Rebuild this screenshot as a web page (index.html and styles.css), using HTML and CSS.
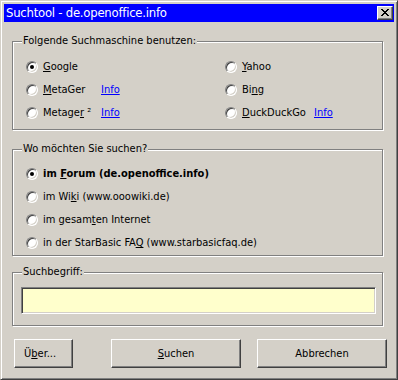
FILE: index.html
```html
<!DOCTYPE html>
<html lang="de">
<head>
<meta charset="utf-8">
<title>Suchtool</title>
<link rel="stylesheet" href="styles.css">
</head>
<body>
<div class="window">
  <div class="titlebar">
    <span class="title">Suchtool - de.openoffice.info</span>
    <span class="close">
      <svg width="8" height="7" viewBox="0 0 8 7"><path d="M0 0h2v1h1v1h2v-1h1v-1h2v1h-1v1h-1v1h-1v1h1v1h1v1h1v1h-2v-1h-1v-1h-2v1h-1v1h-2v-1h1v-1h1v-1h1v-1h-1v-1h-1v-1h-1z" fill="#000"/></svg>
    </span>
  </div>
  <div class="content">
    <div class="group g-engines">
      <span class="legend">Folgende Suchmaschine benutzen:</span>
      <div class="engines">
        <div class="opt"><span class="radio checked"></span><span><u>G</u>oogle</span></div>
        <span></span>
        <div class="opt"><span class="radio"></span><span><u>Y</u>ahoo</span></div>
        <span></span>
        <div class="opt"><span class="radio"></span><span><u>M</u>etaGer</span></div>
        <a class="info" href="#">Info</a>
        <div class="opt"><span class="radio"></span><span>Bi<u>n</u>g</span></div>
        <span></span>
        <div class="opt"><span class="radio"></span><span>Metage<u>r</u> ²</span></div>
        <a class="info" href="#">Info</a>
        <div class="opt"><span class="radio"></span><span><u>D</u>uckDuckGo</span></div>
        <a class="info" href="#">Info</a>
      </div>
    </div>
    <div class="group g-where">
      <span class="legend">Wo möchten Sie suchen?</span>
      <div class="places">
        <div class="opt"><span class="radio checked"></span><b>im <u>F</u>orum (de.openoffice.info)</b></div>
        <div class="opt"><span class="radio"></span><span>im Wi<u>k</u>i (www.ooowiki.de)</span></div>
        <div class="opt"><span class="radio"></span><span>im gesam<u>t</u>en Internet</span></div>
        <div class="opt"><span class="radio"></span><span>in der StarBasic FA<u>Q</u> (www.starbasicfaq.de)</span></div>
      </div>
    </div>
    <div class="group g-term">
      <span class="legend">Suchbegriff:</span>
      <input class="term" type="text" value="">
    </div>
    <div class="buttons">
      <button class="btn btn-about">Ü<u>b</u>er...</button>
      <button class="btn btn-search"><u>S</u>uchen</button>
      <button class="btn btn-cancel">Abbrechen</button>
    </div>
  </div>
</div>
</body>
</html>
```

FILE: styles.css
```css
html, body {
  margin: 0;
  padding: 0;
  background: #d4d0c8;
}

body {
  font-family: "DejaVu Sans", "Liberation Sans", sans-serif;
  font-stretch: semi-condensed;
  font-size: 11px;
  color: #000;
}

.window {
  box-sizing: border-box;
  width: 398px;
  height: 380px;
  padding: 3px;
  border: 1px solid;
  border-color: #d4d0c8 #404040 #404040 #d4d0c8;
  box-shadow: inset 1px 1px #fff, inset -1px -1px #808080;
  background: #d4d0c8;
}

.titlebar {
  height: 18px;
  background: #0000ff;
  display: flex;
  align-items: center;
  justify-content: space-between;
  padding: 0 1px 0 2px;
}

.title {
  color: #fff;
  font-size: 13px;
  letter-spacing: -0.25px;
  line-height: 18px;
}

.close {
  box-sizing: border-box;
  width: 16px;
  height: 14px;
  background: #d4d0c8;
  border: 1px solid;
  border-color: #fff #404040 #404040 #fff;
  box-shadow: inset -1px -1px #808080;
  display: flex;
  align-items: center;
  justify-content: center;
  padding: 0 1px 1px 0;
}

.close svg {
  display: block;
}

.content {
  padding: 19px 0 0 8px;
}

.group {
  position: relative;
  box-sizing: border-box;
  width: 371px;
  border: 1px solid #808080;
  box-shadow: inset 1px 1px #fff, 1px 1px #fff;
}

.legend {
  position: absolute;
  top: -8px;
  left: 9px;
  padding: 0 1px;
  background: #d4d0c8;
  line-height: 14px;
}

.g-engines {
  height: 89px;
  padding: 13px 0 0 13px;
}

.engines {
  display: grid;
  grid-template-columns: 75px 124px 89px auto;
  grid-auto-rows: 23px;
  align-items: center;
}

.opt {
  display: flex;
  align-items: center;
  gap: 5px;
  white-space: nowrap;
}

.radio {
  position: relative;
  box-sizing: border-box;
  width: 12px;
  height: 12px;
  flex: none;
  border-radius: 50%;
  background: #fff;
  border: 1px solid;
  border-color: #808080 #fff #fff #808080;
  box-shadow: inset 1px 1px #404040, inset -1px -1px #d4d0c8;
}

.radio.checked::after {
  content: "";
  position: absolute;
  left: 3px;
  top: 3px;
  width: 4px;
  height: 4px;
  border-radius: 50%;
  background: #000;
}

.info {
  color: #0000ff;
  text-decoration: underline;
}

.g-where {
  height: 107px;
  margin-top: 19px;
  padding: 12px 0 0 13px;
}

.places {
  display: grid;
  grid-auto-rows: 23px;
  align-items: center;
}

.places b {
  font-weight: bold;
}

.g-term {
  height: 54px;
  margin-top: 16px;
  padding: 14px 6px 11px 8px;
}

.term {
  display: block;
  box-sizing: border-box;
  width: 355px;
  height: 27px;
  margin: 0;
  padding: 2px 4px;
  background: #ffffcc;
  border: 1px solid;
  border-color: #808080 #fff #fff #808080;
  box-shadow: inset 1px 1px #404040, inset -1px -1px #d4d0c8;
  font: inherit;
  outline: none;
}

.buttons {
  display: flex;
  margin-top: 13px;
  padding-left: 2px;
}

.btn {
  box-sizing: border-box;
  height: 29px;
  margin: 0;
  padding: 0 0 1px 0;
  background: #d4d0c8;
  border: 1px solid;
  border-color: #fff #404040 #404040 #fff;
  box-shadow: inset -1px -1px #808080;
  font: inherit;
  color: #000;
}

.btn-about {
  width: 59px;
  text-align: left;
  padding-left: 9px;
}

.btn-search {
  width: 130px;
  margin-left: 38px;
}

.btn-cancel {
  width: 130px;
  margin-left: 16px;
}
```
